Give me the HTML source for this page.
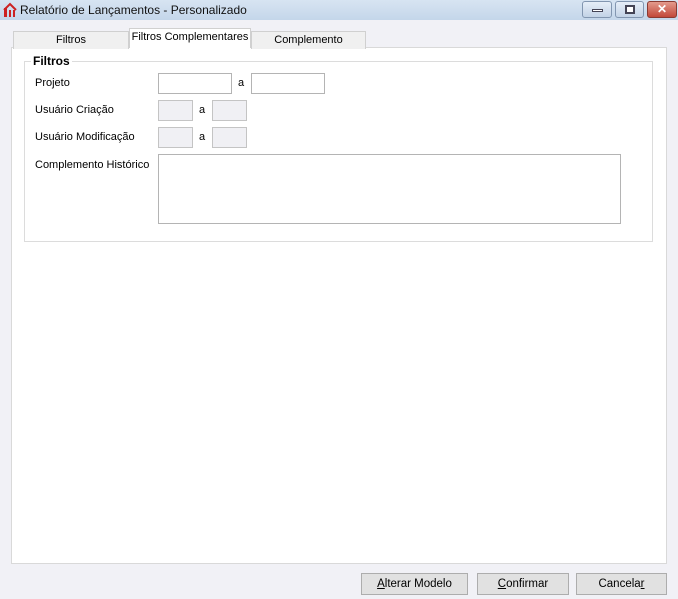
<!DOCTYPE html>
<html><head><style>
*{box-sizing:border-box;margin:0;padding:0}
body{width:678px;height:599px;background:#f1f1f6;font-family:"Liberation Sans",sans-serif;font-size:11px;color:#000;position:relative;overflow:hidden}
.abs{position:absolute}
.title{left:0;top:0;width:678px;height:20px;background:linear-gradient(#d7e4f2,#c4d6ea);}
.title span{position:absolute;left:20px;top:3px;font-size:12px;color:#111}
.tb{top:1px;height:17px;border:1px solid #8296b0;border-radius:3px;background:linear-gradient(#e6eef8,#c3d3e6)}
.tab{top:30px;height:18px;border:1px solid #d0d0d0;border-bottom:none;background:#f0f0f0;text-align:center;line-height:17px}
.panel{left:11px;top:47px;width:656px;height:517px;background:#fff;border:1px solid #d9d9d9}
.group{left:24px;top:61px;width:629px;height:181px;border:1px solid #dcdcdc}
.lbl{left:35px}
.inp{border:1px solid #b4b4b4;background:#fff}
.dis{border:1px solid #c4c4c4;background:#f0f0f4}
.btn{top:573px;height:22px;border:1px solid #adadad;background:#e1e1e1;text-align:center;line-height:20px;font-size:11.5px}
</style></head><body>
<div class="abs title">
<svg class="abs" style="left:3px;top:2px" width="14" height="15" viewBox="0 0 14 15"><path d="M1 8 L7 2 L13 8" stroke="#c22" stroke-width="2" fill="none"/><rect x="1" y="6" width="3" height="9" fill="#c22"/><rect x="6" y="8" width="2" height="7" fill="#c22"/><rect x="10" y="8" width="2" height="7" fill="#c22"/></svg>
<span>Relatório de Lançamentos - Personalizado</span></div>
<div class="abs tb" style="left:582px;width:30px"><div class="abs" style="left:9px;top:7px;width:11px;height:3px;background:#fff;border:1px solid #445"></div></div>
<div class="abs tb" style="left:615px;width:29px"><div class="abs" style="left:9px;top:3px;width:10px;height:9px;border:2px solid #445;background:#fff"></div></div>
<div class="abs" style="left:647px;top:1px;width:30px;height:17px;border:1px solid #8a3a32;border-radius:3px;background:linear-gradient(#e39a8c,#c2483a);color:#fff;text-align:center;font-weight:bold;font-size:12px;line-height:15px">✕</div>
<div class="abs panel"></div>
<div class="abs tab" style="left:13px;width:116px;top:31px">Filtros</div>
<div class="abs tab" style="left:251px;width:115px;top:31px">Complemento</div>
<div class="abs tab" style="left:129px;width:122px;top:28px;height:20px;background:#fff;line-height:17px">Filtros Complementares</div>
<div class="abs group"></div>
<div class="abs" style="left:31px;top:54px;background:#fff;padding:0 2px;font-weight:bold;font-size:12px">Filtros</div>
<div class="abs lbl" style="top:77px">Projeto</div>
<div class="abs inp" style="left:158px;top:73px;width:74px;height:21px"></div>
<div class="abs" style="left:238px;top:77px">a</div>
<div class="abs inp" style="left:251px;top:73px;width:74px;height:21px"></div>
<div class="abs lbl" style="top:104px">Usuário Criação</div>
<div class="abs dis" style="left:158px;top:100px;width:35px;height:21px"></div>
<div class="abs" style="left:199px;top:104px">a</div>
<div class="abs dis" style="left:212px;top:100px;width:35px;height:21px"></div>
<div class="abs lbl" style="top:131px">Usuário Modificação</div>
<div class="abs dis" style="left:158px;top:127px;width:35px;height:21px"></div>
<div class="abs" style="left:199px;top:131px">a</div>
<div class="abs dis" style="left:212px;top:127px;width:35px;height:21px"></div>
<div class="abs lbl" style="top:159px">Complemento Histórico</div>
<div class="abs inp" style="left:158px;top:154px;width:463px;height:70px"></div>
<div class="abs btn" style="left:361px;width:107px"><u>A</u>lterar Modelo</div>
<div class="abs btn" style="left:477px;width:92px"><u>C</u>onfirmar</div>
<div class="abs btn" style="left:576px;width:91px">Cancela<u>r</u></div>
</body></html>
